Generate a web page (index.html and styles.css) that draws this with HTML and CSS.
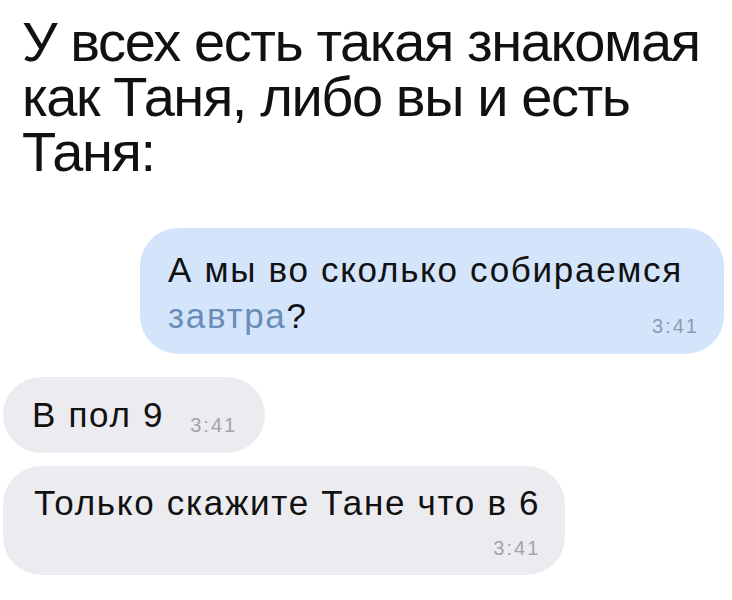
FILE: index.html
```html
<!DOCTYPE html>
<html>
  <head>
    <meta charset="utf-8">
    <title>Таня</title>
    <link rel="stylesheet" href="styles.css">
  </head>
  <body>
<h1 class="caption">У всех есть такая знакомая как Таня, либо вы и есть Таня:</h1>

<div class="chat">
  <div class="msg msg-out">
    <div class="msg-text">А мы во сколько собираемся <span class="link">завтра</span>?</div>
    <span class="msg-time">3:41</span>
  </div>

  <div class="msg msg-in msg-short">
    <div class="msg-text">В пол 9</div>
    <span class="msg-time">3:41</span>
  </div>

  <div class="msg msg-in msg-long">
    <div class="msg-text">Только скажите Тане что в 6</div>
    <span class="msg-time">3:41</span>
  </div>
</div>
  </body>
</html>
```

FILE: styles.css
```css
body {
	margin: 0;
	background: #fff;
	color: #111;
	font-family: "Liberation Sans", Arial, sans-serif;
	width: 732px;
}

.caption {
	margin: 0;
	padding: 14px 20px 0 22px;
	font-size: 56px;
	font-weight: normal;
	line-height: 55px;
	letter-spacing: -1.4px;
}

.chat {
	display: flex;
	flex-direction: column;
	padding: 49px 8px 0 3px;
}

.msg {
	display: flex;
	border-radius: 38px;
	font-size: 35px;
	letter-spacing: 1.7px;
}

.msg-time {
	font-size: 20px;
	line-height: 20px;
	letter-spacing: 2px;
	color: #a3a3ab;
}

.msg-out {
	align-self: flex-end;
	flex-direction: column;
	width: 584px;
	box-sizing: border-box;
	padding: 19px 25px 18px 28px;
	background: #d4e5fb;
	line-height: 46px;
}
.msg-out .msg-time {
	align-self: flex-end;
	margin-top: -23px;
	color: #8d9bb0;
}
.link { color: #6b8eb8; }

.msg-in { align-self: flex-start; background: #ececf0; }

.msg-short {
	align-items: baseline;
	gap: 26px;
	margin-top: 23px;
	padding: 20px 28px 20px 29px;
	line-height: 36px;
}
.msg-short .msg-time { position: relative; top: 5px; }

.msg-long {
	flex-direction: column;
	margin-top: 13px;
	padding: 19px 25px 17px 31px;
	line-height: 36px;
}
.msg-long .msg-time { align-self: flex-end; margin-top: 17px; }
```
